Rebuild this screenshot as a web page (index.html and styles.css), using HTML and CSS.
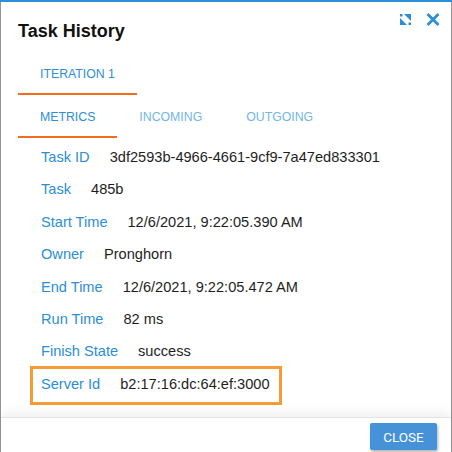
FILE: index.html
```html
<!DOCTYPE html>
<html lang="en">
<head>
    <meta charset="UTF-8">
    <meta name="viewport" content="width=device-width, initial-scale=1.0">
    <title>Task History</title>
    <link rel="stylesheet" href="styles.css">
</head>
<body>
    <div class="page">
        <div class="dialog">
            <div class="dialog-header">
                <h1>Task History</h1>
                <div class="header-actions">
                    <svg class="icon-compress" width="11" height="11" viewBox="0 0 11 11">
                        <rect x="0" y="0" width="2.5" height="2.5" fill="#2b8fd6"/>
                        <polygon points="4,0 11,0 11,7" fill="#2b8fd6"/>
                        <polygon points="0,4 0,11 7,11" fill="#2b8fd6"/>
                        <rect x="8.5" y="8.5" width="2.5" height="2.5" fill="#2b8fd6"/>
                    </svg>
                    <svg class="icon-close" width="14" height="13" viewBox="0 0 14 13">
                        <path d="M1.5 1 L12.5 12 M12.5 1 L1.5 12" stroke="#2b8fd6" stroke-width="2.8" stroke-linecap="butt"/>
                    </svg>
                </div>
            </div>

            <div class="tabs">
                <div class="tab active">ITERATION 1</div>
            </div>
            <div class="tabs subtabs">
                <div class="tab active">METRICS</div>
                <div class="tab">INCOMING</div>
                <div class="tab">OUTGOING</div>
            </div>

            <div class="dialog-body">
                <div class="row"><span class="label">Task ID</span><span class="value">3df2593b-4966-4661-9cf9-7a47ed833301</span></div>
                <div class="row"><span class="label">Task</span><span class="value">485b</span></div>
                <div class="row"><span class="label">Start Time</span><span class="value">12/6/2021, 9:22:05.390 AM</span></div>
                <div class="row"><span class="label">Owner</span><span class="value">Pronghorn</span></div>
                <div class="row"><span class="label">End Time</span><span class="value">12/6/2021, 9:22:05.472 AM</span></div>
                <div class="row"><span class="label">Run Time</span><span class="value">82 ms</span></div>
                <div class="row"><span class="label">Finish State</span><span class="value">success</span></div>
                <div class="row highlight"><span class="label">Server Id</span><span class="value">b2:17:16:dc:64:ef:3000</span></div>
            </div>

            <div class="dialog-footer">
                <button class="close-btn">CLOSE</button>
            </div>
        </div>
    </div>
</body>
</html>
```

FILE: styles.css
```css
html, body {
    margin: 0;
    height: 100%;
}
body {
    font-family: "Liberation Sans", Arial, sans-serif;
    background-color: #959595;
    overflow: hidden;
}
.page {
    height: 452px;
    border-top: 2px solid #2d8fd5;
    box-sizing: border-box;
}
.dialog {
    margin: 0 1px;
    height: 450px;
    background-color: white;
    display: flex;
    flex-direction: column;
}
.dialog-header {
    display: flex;
    justify-content: space-between;
    align-items: flex-start;
    padding: 11px 11px 11px 17px;
}
.dialog-header h1 {
    margin: 7px 0 0;
    font-size: 18px;
    line-height: 22px;
    font-weight: bold;
    color: #111;
}
.header-actions {
    display: flex;
    align-items: flex-start;
    gap: 15px;
}
.icon-compress {
    margin-top: 1px;
}
.tabs {
    display: flex;
    padding-left: 17px;
}
.subtabs {
    margin-top: 1px;
}
.tab {
    padding: 14px 22px 12px;
    font-size: 12.3px;
    line-height: 14px;
    color: #72b6e6;
    border-bottom: 2px solid transparent;
}
.tab.active {
    color: #2b8ed6;
    border-bottom-color: #f26c22;
}
.dialog-body {
    flex-grow: 1;
    padding-top: 3px;
    overflow: hidden;
}
.row {
    display: flex;
    padding-left: 40px;
    font-size: 14.6px;
    line-height: 32.4px;
    white-space: nowrap;
}
.label {
    color: #2b8ed6;
    margin-right: 20px;
}
.value {
    color: #1e1e1e;
}
.row.highlight {
    display: inline-flex;
    margin: -2px 0 0 29px;
    padding: 0 9px 3px 8px;
    line-height: 30px;
    border: 3px solid #f59d34;
}
.dialog-footer {
    height: 35px;
    box-sizing: border-box;
    padding: 5px 14px 0;
    display: flex;
    justify-content: flex-end;
    align-items: flex-start;
    border-top: 1px solid #e4e4e4;
    box-shadow: 0 -5px 10px rgba(0, 0, 0, 0.06);
}
.close-btn {
    width: 67px;
    height: 27px;
    background-color: #4592d8;
    color: white;
    border: none;
    border-radius: 2px;
    font-family: Roboto, sans-serif;
    font-size: 13.5px;
    padding: 0;
    box-shadow: 1px 2px 3px rgba(0, 0, 0, 0.3);
}
```
